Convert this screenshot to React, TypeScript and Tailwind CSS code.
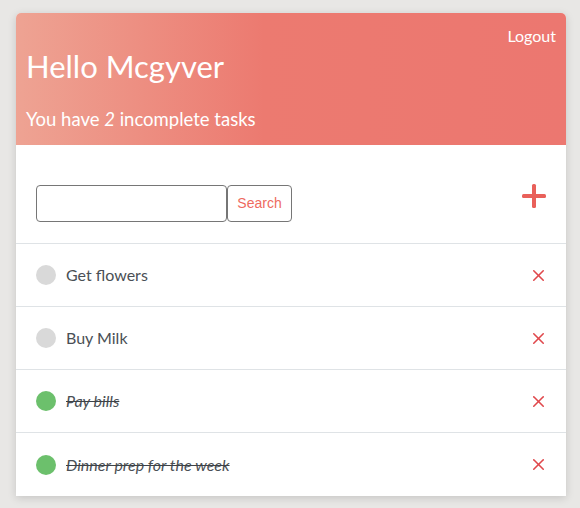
import { X } from 'lucide-react';

type Task = { id: number; title: string; done: boolean };

const tasks: Task[] = [
  { id: 1, title: 'Get flowers', done: false },
  { id: 2, title: 'Buy Milk', done: false },
  { id: 3, title: 'Pay bills', done: true },
  { id: 4, title: 'Dinner prep for the week', done: true },
];

export default function App() {
  const incomplete = tasks.filter((t) => !t.done).length;

  return (
    <div className="min-h-[508px] bg-[#e8e7e5] pt-[13px] pl-4 font-['Lato','Open_Sans',sans-serif]">
      <div className="w-[550px] bg-white rounded-t-[5px] shadow-[0_2px_8px_rgba(0,0,0,0.15)] overflow-hidden">
        <header className="h-[132px] bg-[linear-gradient(90deg,#eea393_0%,#ec7a70_45%,#ec7770_100%)] text-white px-[10px] relative">
          <button className="absolute right-[10px] top-[11px] text-[16px] text-white">Logout</button>
          <h1 className="pt-[34px] text-[31px] leading-[38px]">Hello Mcgyver</h1>
          <p className="mt-[22px] text-[18.5px] leading-[24px]">
            You have <span className="italic">{incomplete}</span> incomplete tasks
          </p>
        </header>

        <div className="h-[99px] flex items-start pt-10 pl-5 pr-[20px] border-b border-[#dfe3e6]">
          <input className="w-[191px] h-[37px] border border-[#767676] rounded-[4px] px-2 outline-none" />
          <button className="w-[65px] h-[37px] border border-[#767676] rounded-[4px] text-[#ee6b5f] text-[14px] font-['Liberation_Sans',sans-serif]">
            Search
          </button>
          <svg className="ml-auto -mt-[1px]" width="24" height="24" viewBox="0 0 24 24">
            <rect x="10" y="0" width="4" height="24" rx="1.5" fill="#e9605a" />
            <rect x="0" y="10" width="24" height="4" rx="1.5" fill="#e9605a" />
          </svg>
        </div>

        <ul>
          {tasks.map((t, i) => (
            <li
              key={t.id}
              className={`h-[63px] flex items-center pl-5 pr-[18px] ${i < tasks.length - 1 ? 'border-b border-[#dfe3e6]' : ''}`}
            >
              <span className={`w-5 h-5 rounded-full ${t.done ? 'bg-[#6cc06c]' : 'bg-[#d9d9d9]'}`} />
              <span
                className={`ml-[10px] text-[16px] text-[#4a4f55] ${t.done ? 'italic line-through decoration-[#3d4247]' : ''}`}
              >
                {t.title}
              </span>
              <X className="ml-auto w-[19px] h-[19px] text-[#e0484c]" strokeWidth={2} />
            </li>
          ))}
        </ul>
      </div>
    </div>
  );
}
